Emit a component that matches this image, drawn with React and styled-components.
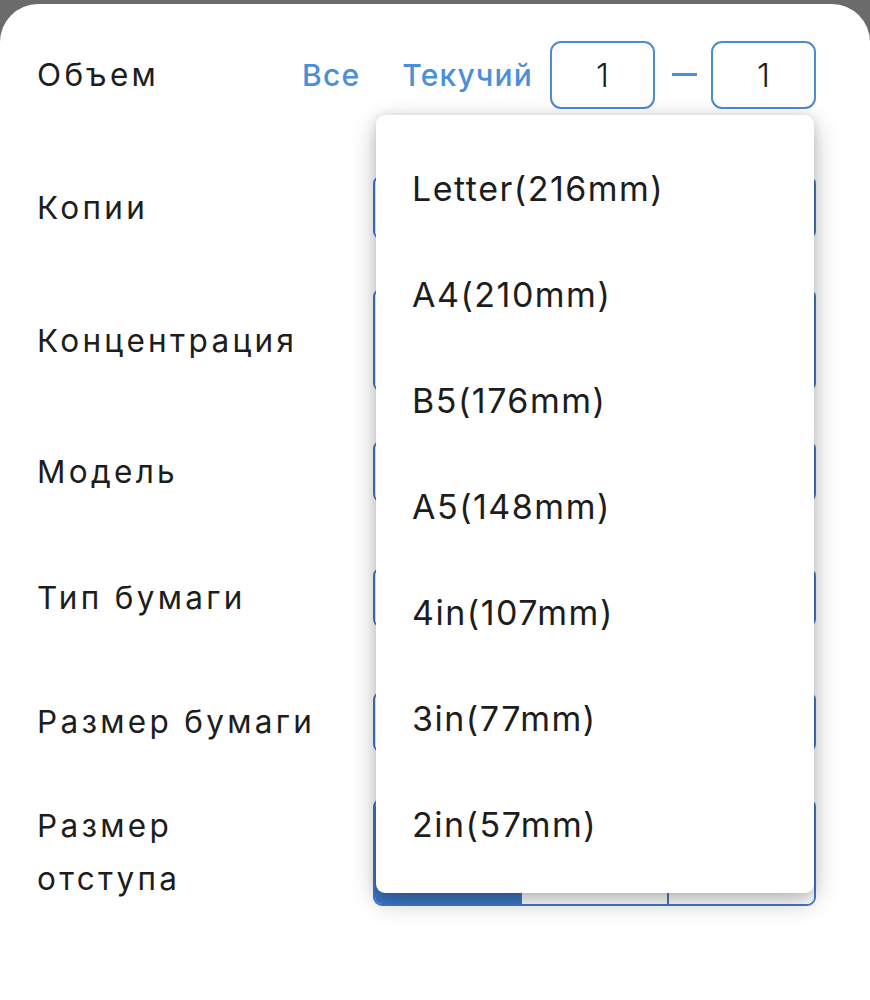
import React from 'react';
import styled, { createGlobalStyle } from 'styled-components';

const GlobalStyle = createGlobalStyle`
  html, body {
    margin: 0;
    padding: 0;
    background: #6b6b6b;
  }
  body {
    font-family: Inter, "Noto Sans", "Liberation Sans", sans-serif;
    -webkit-font-smoothing: antialiased;
  }
`;

const Screen = styled.div`
  width: 870px;
  height: 1000px;
  padding-top: 4px;
  box-sizing: border-box;
  overflow: hidden;
`;

const Sheet = styled.div`
  position: relative;
  background: #fff;
  height: 996px;
  border-radius: 38px 38px 0 0;
  padding-top: 4px;
  box-sizing: border-box;
`;

const Row = styled.div`
  display: flex;
  align-items: center;
  height: ${p => p.h}px;
  padding: 0 54px 0 37px;
`;

const Label = styled.div`
  flex: 1;
  font-size: 31.5px;
  letter-spacing: 3.3px;
  line-height: 53px;
  color: #1d1d1d;
`;

const Link = styled.span`
  font-size: 30px;
  font-weight: 500;
  letter-spacing: 1.2px;
  color: #4b8fd8;
  margin-right: ${p => p.gap}px;
`;

const NumBox = styled.div`
  width: 105px;
  height: 68px;
  box-sizing: border-box;
  border: 2px solid #4f8ad3;
  border-radius: 11px;
  display: flex;
  align-items: center;
  justify-content: center;
  font-size: 33px;
  font-weight: 300;
  color: #1d1d1d;
`;

const Dash = styled.div`
  width: 25px;
  height: 3px;
  background: #4b8fd8;
  margin: 0 14px 0 17px;
`;

const Segmented = styled.div`
  width: 443px;
  height: ${p => p.h}px;
  box-sizing: border-box;
  border: 2px solid #4479c6;
  border-radius: 9px;
  display: flex;
  overflow: hidden;
`;

const Segment = styled.div`
  flex: 1;
  background: ${p => (p.active ? '#3a76c4' : '#fff')};
  border-left: ${p => (p.first ? 'none' : '2px solid #4479c6')};
`;

const Dropdown = styled.div`
  position: absolute;
  left: 376px;
  top: 111px;
  width: 438px;
  height: 778px;
  box-sizing: border-box;
  padding: 20px 0 15px;
  background: #fff;
  border-radius: 9px;
  box-shadow: 0 8px 24px rgba(0, 0, 0, 0.28), 0 0 10px rgba(0, 0, 0, 0.1);
`;

const Option = styled.div`
  height: 106px;
  display: flex;
  align-items: center;
  padding-left: 36px;
  font-size: 34px;
  letter-spacing: 1.5px;
  color: #1d1d1d;
`;

const controls = [
  { label: 'Копии', row: 133, h: 65, segs: 1 },
  { label: 'Концентрация', row: 132, h: 104, segs: 1 },
  { label: 'Модель', row: 131, h: 63, segs: 1 },
  { label: 'Тип бумаги', row: 121, h: 61, segs: 1 },
  { label: 'Размер бумаги', row: 127, h: 62, segs: 1 },
  { label: 'Размер\nотступа', row: 133, h: 108, segs: 3, active: 0 },
];

const sizes = [
  'Letter(216mm)',
  'A4(210mm)',
  'B5(176mm)',
  'A5(148mm)',
  '4in(107mm)',
  '3in(77mm)',
  '2in(57mm)',
];

export default function App() {
  return (
    <Screen>
      <GlobalStyle />
      <Sheet>
        <Row h={133}>
          <Label>Объем</Label>
          <Link gap={42}>Все</Link>
          <Link gap={17}>Текучий</Link>
          <NumBox>1</NumBox>
          <Dash />
          <NumBox>1</NumBox>
        </Row>
        {controls.map(c => (
          <Row key={c.label} h={c.row}>
            <Label>
              {c.label.split('\n').map(line => (
                <div key={line}>{line}</div>
              ))}
            </Label>
            <Segmented h={c.h}>
              {Array.from({ length: c.segs }, (_, i) => (
                <Segment key={i} first={i === 0} active={c.active === i} />
              ))}
            </Segmented>
          </Row>
        ))}
        <Dropdown>
          {sizes.map(s => (
            <Option key={s}>{s}</Option>
          ))}
        </Dropdown>
      </Sheet>
    </Screen>
  );
}
